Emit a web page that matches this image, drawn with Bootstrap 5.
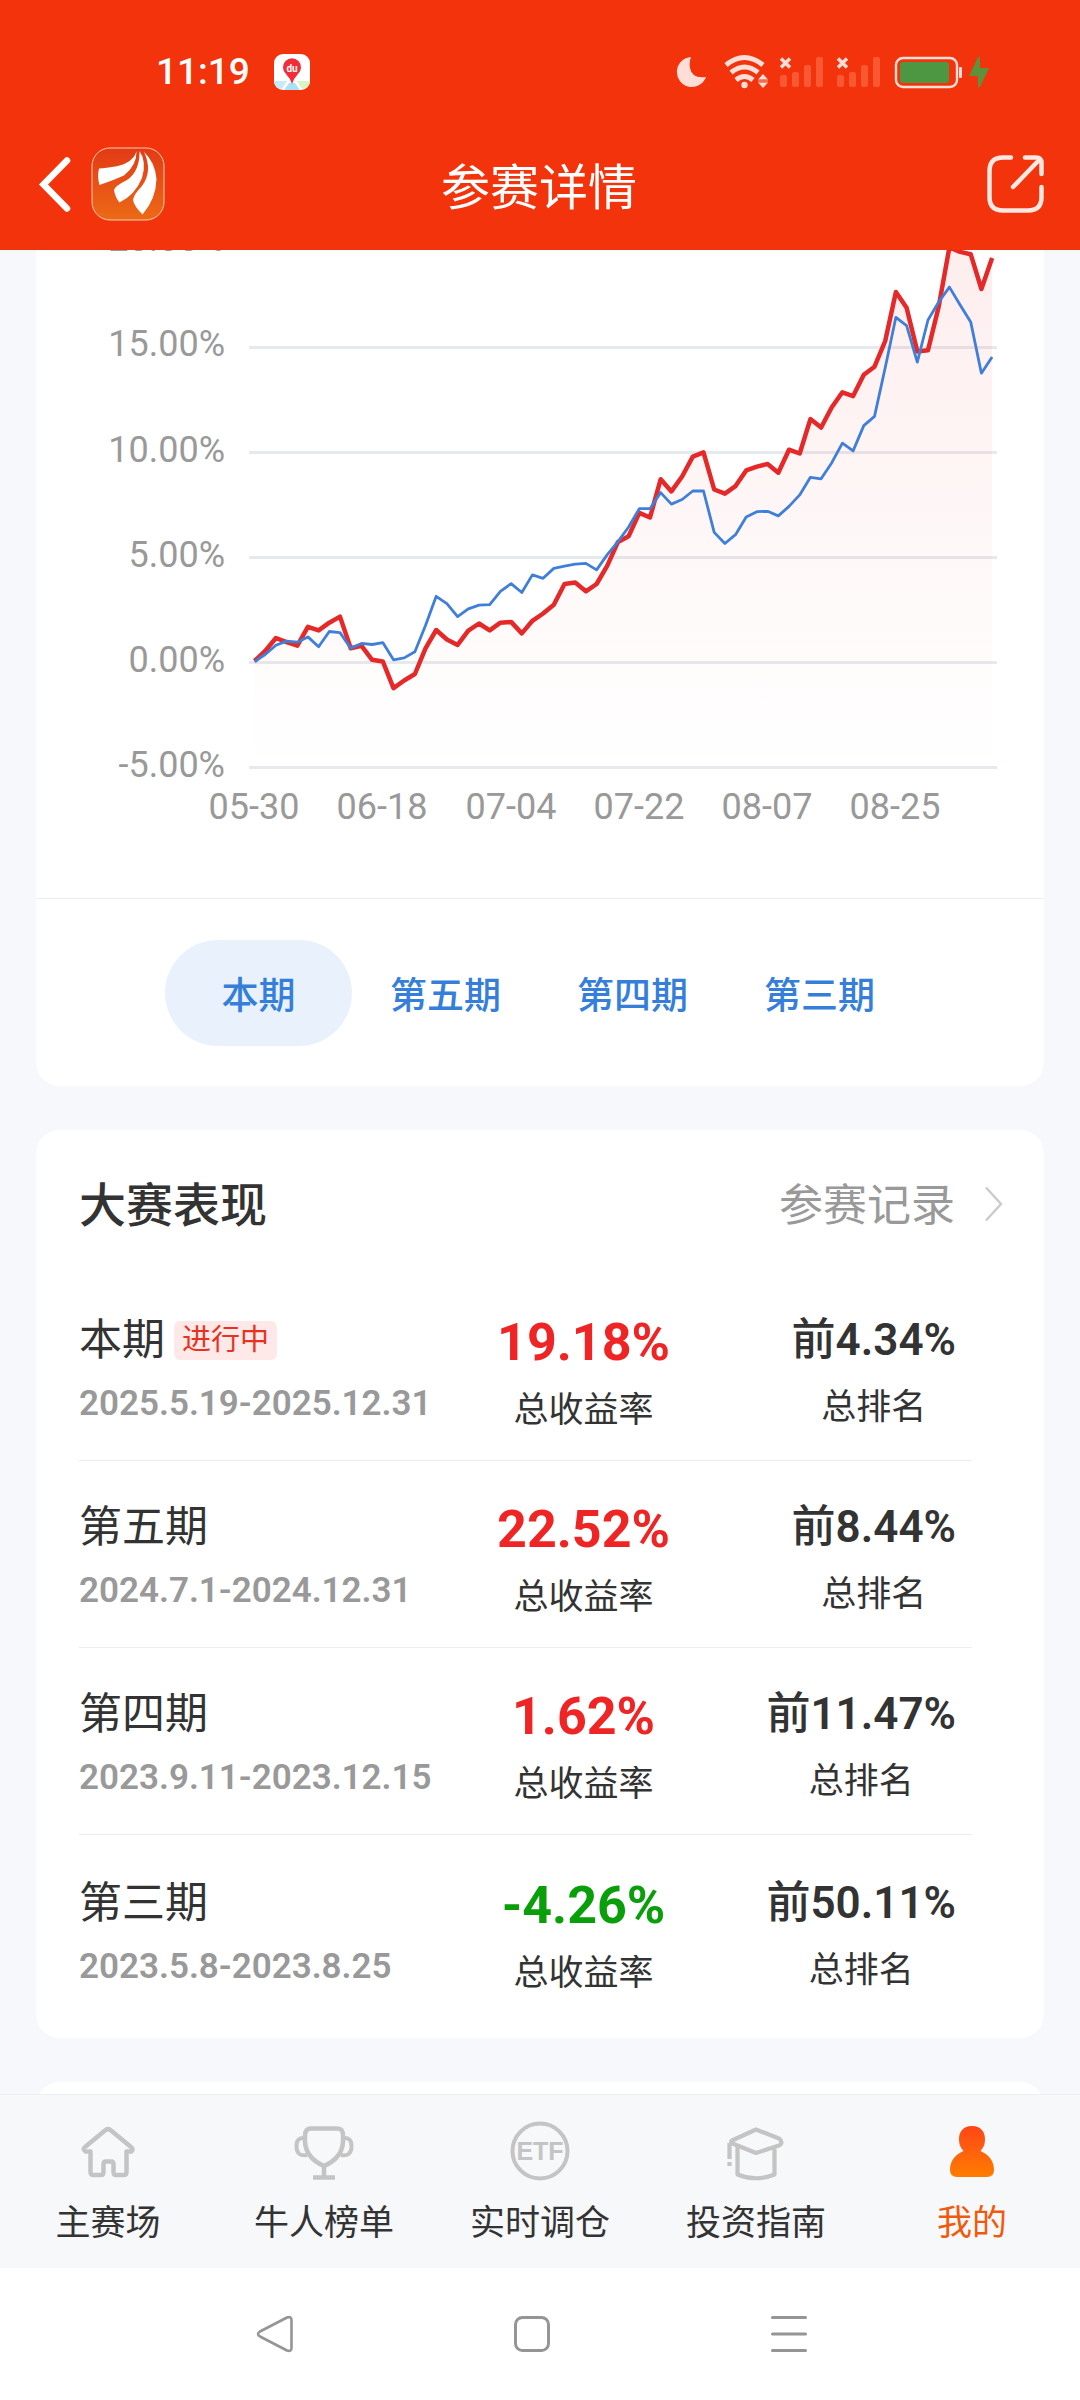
<!DOCTYPE html>
<html lang="zh-CN">
<head>
<meta charset="utf-8">
<meta name="viewport" content="width=device-width, initial-scale=1">
<title>参赛详情</title>
<link href="https://cdn.jsdelivr.net/npm/bootstrap@5.3.0/dist/css/bootstrap.min.css" rel="stylesheet">
<style>
  :root { --brand: #f2330b; --ink: #333; --muted: #999; --page: #f6f8fb; --rule: #ebedef; --up: #ef2424; --down: #0a9f0a; --link: #357fdb; }
  body { font-family: Roboto, "Noto Sans CJK SC", sans-serif; background: var(--page); color: var(--ink); }
  h1, .term-btn, .caption-text { font-family: "Noto Sans CJK SC", sans-serif; }
  svg { display: block; flex: none; }
  a { text-decoration: none; color: inherit; }
  .top-area { background: var(--brand); color: #fff; }
  .status-line { padding: 42px 90px 0 156px; height: 102px; }
  .clock { font-size: 37px; line-height: 60px; font-weight: 500; }
  .title-line { height: 148px; padding: 16px 34px 0 32px; }
  .title-line h1 { font-size: 49px; line-height: 60px; }
  .side { width: 240px; }
  .icon-btn { background: none; border: 0; padding: 0; }
  .feed { padding: 0 36px; gap: 44px; }
  .panel { background: #fff; border-radius: 24px; flex: none; }
  .panel-first { border-radius: 0 0 24px 24px; }
  .panel-next { height: 90px; }
  .chart { width: 100%; height: auto; }
  .chart text { font-size: 36px; fill: var(--muted); }
  .term-bar { border-top: 1px solid var(--rule); padding: 41px 2px 40px 0; }
  .term-btn { width: 187px; height: 106px; border: 0; border-radius: 53px; background: none; color: var(--link); font-size: 37px; font-weight: 500; line-height: 106px; padding: 0; }
  .term-btn.active { background: #e9f2fc; }
  .panel-head { padding: 44px 41px 36px 43px; }
  .panel-head h2 { font-size: 47px; line-height: 64px; font-weight: 500; }
  .more-link { font-size: 44px; line-height: 64px; color: var(--muted); gap: 30px; }
  .record-list { padding: 0 72px 36px 43px; }
  .record { padding: 34px 0 21px; border-bottom: 1px solid var(--rule); }
  .record:last-child { border: 0; padding: 36px 0 0; }
  .record div > div { line-height: 64px; }
  .col-term { width: 43%; }
  .col-rate { width: 27%; padding-top: 3px; }
  .col-rank { padding-right: 16px; }
  .term-name { font-size: 43px; gap: 9px; }
  .term-tag { font-size: 29px; line-height: 39px; padding: 0 8px; border-radius: 6px; background: #fee9e8; color: #e6321f; }
  .term-date { font-size: 35px; font-weight: 600; color: var(--muted); }
  .rate-num { font-size: 52px; font-weight: 700; color: var(--up); }
  .rate-num.down { color: var(--down); }
  .rank-num { font-size: 44px; font-weight: 500; }
  .rank-num b { font-weight: 600; }
  .caption-text { font-size: 35px; }
  .tab-bar { background: #f7f8fa; border-top: 1px solid var(--rule); height: 174px; padding-top: 23px; }
  .tab-bar a { font-size: 35px; line-height: 50px; gap: 15px; flex: 1; }
  .tab-bar a.active { color: #f15a0c; }
  .line-icon { fill: none; stroke: #c4c4c4; stroke-width: 5; stroke-linejoin: round; }
  .sys-bar { background: #fff; height: 132px; padding: 0 15% 0 13.5%; }
  .sys-bar svg { fill: none; stroke: #959595; stroke-width: 3; stroke-linejoin: round; stroke-linecap: round; }
</style>
</head>
<body>
<div class="vh-100 d-flex flex-column">
  <header class="top-area flex-shrink-0">
    <div class="status-line d-flex justify-content-between">
      <div class="d-flex align-items-center gap-4">
        <span class="clock">11:19</span>
        <svg width="36" height="36" viewBox="0 0 36 36" aria-label="地图">
          <rect width="36" height="36" rx="9" fill="#fff"/>
          <path d="M0 27h13L8 35Q0 34 0 27z" fill="#c5eafb"/><path d="M36 27H23l5 8q8-1 8-8z" fill="#d8f5c3"/><path d="M15 29h6l5 7H10z" fill="#a9e2f8"/>
          <path d="M18 30Q16 24 12 20A9 9 0 1 1 24 20Q20 24 18 30z" fill="#f22d37"/>
          <text x="18" y="18" font-size="10" font-weight="700" fill="#fff" text-anchor="middle">du</text>
        </svg>
      </div>
      <svg width="314" height="60" viewBox="676 42 314 60" fill="#ffded8">
        <path d="M691 57a15 15 0 1 0 15 20q-14 2-16-9-1-6 1-11z"/>
        <g fill="none" stroke="#ffded8" stroke-width="5"><path d="M726 65q18.500-15 37 0"/><path d="M731 72.500q13.500-11 27 0"/><path d="M736 80q8.500-7 17 0"/></g>
        <circle cx="744.500" cy="85" r="3.200"/>
        <path d="M758 79.500l5-5.500 5 5.500zM758 82.500h10l-5 5.500z"/><path d="M758 81h10" stroke="#f9a08c"/>
        <g fill="#fa5832"><rect x="780" y="75" width="7" height="12" rx="2"/><rect x="792" y="72" width="7" height="15" rx="2"/><rect x="804" y="65" width="7" height="22" rx="2"/><rect x="816" y="57" width="7" height="30" rx="2"/>
        <rect x="837" y="75" width="7" height="12" rx="2"/><rect x="849" y="72" width="7" height="15" rx="2"/><rect x="861" y="65" width="7" height="22" rx="2"/><rect x="873" y="57" width="7" height="30" rx="2"/></g>
        <path d="M781 58.500l9 9m0-9l-9 9M838 58.500l9 9m0-9l-9 9" stroke="#ffded8" stroke-width="3.500"/>
        <rect x="896" y="58" width="61" height="29" rx="7" fill="none" stroke="#ffded8" stroke-width="2.400"/>
        <rect x="900" y="62" width="49" height="21" rx="3" fill="#4d9743"/><rect x="959" y="67" width="3" height="11" rx="1"/>
        <path d="M978 57l-9 19h9v11h2l9-19h-9V57z" fill="#5d913a"/>
      </svg>
    </div>
    <div class="title-line d-flex align-items-center justify-content-between">
      <div class="side d-flex align-items-center">
        <button class="icon-btn" type="button" aria-label="返回"><svg width="59" height="74" viewBox="32 147 59 74"><path d="M67 160.500L43.500 184.500 67 208.500" fill="none" stroke="#fff" stroke-width="6.500" stroke-linecap="round" stroke-linejoin="miter"/></svg></button>
        <a href="#" aria-label="首页"><svg width="74" height="74" viewBox="0 0 74 74">
          <defs><linearGradient id="lg" x2="0" y2="1"><stop stop-color="#e33a16"/><stop offset="1" stop-color="#ec6a16"/></linearGradient></defs>
          <rect x="1" y="1" width="72" height="72" rx="18" fill="url(#lg)" stroke="#f9cfae"/>
          <g fill="#fff"><path d="M45.500 4C42 16 30 20 8 21.500Q6 30 8.500 38Q22 33.500 33 28.500Q46 18 45.500 4z"/><path d="M48.500 4Q49 24 36 33Q24 39 23 43Q24 50 28.500 55.500Q44 48 51 31Q56 15 48.500 4z"/><path d="M53 5Q64 15 65.500 32Q65 52 51.500 67.500Q43 59 42 53Q43 47 51 39Q62 24 53 5z"/></g>
        </svg></a>
      </div>
      <h1 class="m-0 fw-normal">参赛详情</h1>
      <div class="side d-flex justify-content-end">
        <button class="icon-btn" type="button" aria-label="分享"><svg width="60" height="60" viewBox="0 0 60 60" fill="none" stroke="#ffe7e2" stroke-width="4.500" stroke-linecap="round" stroke-linejoin="round"><path d="M25 3.500H17Q3.500 3.500 3.500 17V43Q3.500 56.500 17 56.500H42Q55.500 56.500 55.500 43V33"/><path d="M39 3.500H50Q55.500 3.500 55.500 9V20M54 5L27 33"/></svg></button>
      </div>
    </div>
  </header>

  <main class="feed flex-fill d-flex flex-column overflow-hidden" style="min-height:0">
    <section class="panel panel-first">
      <svg class="chart" viewBox="36 250 1008 648" role="img" aria-label="收益率走势">
        <defs><linearGradient id="fade" gradientUnits="userSpaceOnUse" x1="0" y1="240" x2="0" y2="768"><stop stop-color="#ef2424" stop-opacity=".08"/><stop offset="1" stop-color="#ef2424" stop-opacity="0"/></linearGradient></defs>
        <path d="M249 347.500H997M249 452.500H997M249 557.500H997M249 662.500H997M249 767.500H997" stroke="#e6e9ee" stroke-width="3"/>
        <g text-anchor="end"><text x="225" y="251">20.00%</text><text x="225" y="356">15.00%</text><text x="225" y="462">10.00%</text><text x="225" y="567">5.00%</text><text x="225" y="672">0.00%</text><text x="225" y="777">-5.00%</text></g>
        <g text-anchor="middle"><text x="254" y="819">05-30</text><text x="382" y="819">06-18</text><text x="511" y="819">07-04</text><text x="639" y="819">07-22</text><text x="767" y="819">08-07</text><text x="895" y="819">08-25</text></g>
        <polygon id="area" fill="url(#fade)"/>
        <polyline id="mine" fill="none" stroke="#e52929" stroke-width="4.500" stroke-linejoin="round"/>
        <polyline id="index" fill="none" stroke="#3f7fd9" stroke-width="2.800" stroke-linejoin="round"/>
      </svg>
      <div class="term-bar d-flex justify-content-center">
        <button type="button" class="term-btn active">本期</button>
        <button type="button" class="term-btn">第五期</button>
        <button type="button" class="term-btn">第四期</button>
        <button type="button" class="term-btn">第三期</button>
      </div>
    </section>

    <section class="panel">
      <div class="panel-head d-flex justify-content-between">
        <h2 class="m-0">大赛表现</h2>
        <a href="#" class="more-link d-flex align-items-center">参赛记录
          <svg class="mb-1" width="18" height="36" viewBox="0 0 18 36"><path d="M1 1.500L16 18 1 34.500" fill="none" stroke="#ccc" stroke-width="2.500"/></svg></a>
      </div>
      <ul class="record-list list-unstyled m-0">
        <li class="record d-flex">
          <div class="col-term"><div class="term-name d-flex align-items-center">本期<span class="term-tag">进行中</span></div><div class="term-date">2025.5.19-2025.12.31</div></div>
          <div class="col-rate text-center"><div class="rate-num">19.18%</div><div class="caption-text">总收益率</div></div>
          <div class="col-rank text-center ms-auto"><div class="rank-num">前<b>4.34%</b></div><div class="caption-text">总排名</div></div>
        </li>
        <li class="record d-flex">
          <div class="col-term"><div class="term-name">第五期</div><div class="term-date">2024.7.1-2024.12.31</div></div>
          <div class="col-rate text-center"><div class="rate-num">22.52%</div><div class="caption-text">总收益率</div></div>
          <div class="col-rank text-center ms-auto"><div class="rank-num">前<b>8.44%</b></div><div class="caption-text">总排名</div></div>
        </li>
        <li class="record d-flex">
          <div class="col-term"><div class="term-name">第四期</div><div class="term-date">2023.9.11-2023.12.15</div></div>
          <div class="col-rate text-center"><div class="rate-num">1.62%</div><div class="caption-text">总收益率</div></div>
          <div class="col-rank text-center ms-auto"><div class="rank-num">前<b>11.47%</b></div><div class="caption-text">总排名</div></div>
        </li>
        <li class="record d-flex">
          <div class="col-term"><div class="term-name">第三期</div><div class="term-date">2023.5.8-2023.8.25</div></div>
          <div class="col-rate text-center"><div class="rate-num down">-4.26%</div><div class="caption-text">总收益率</div></div>
          <div class="col-rank text-center ms-auto"><div class="rank-num">前<b>50.11%</b></div><div class="caption-text">总排名</div></div>
        </li>
      </ul>
    </section>
    <section class="panel panel-next"></section>
  </main>

  <nav class="tab-bar d-flex flex-shrink-0" aria-label="主导航">
    <a href="#" class="d-flex flex-column align-items-center">
      <svg class="line-icon" width="66" height="66" viewBox="0 0 66 66"><path d="M30 12.500Q33 9.500 36 12.500L56 29Q59 31 56.500 33.500H51.500V54Q51.500 57 48.500 57H41Q38.500 57 38.500 54V46Q38.500 43.500 36 43.500H31Q28.500 43.500 28.500 46V54Q28.500 57 26 57H18.500Q15.500 57 15.500 54V33.500H10.500Q7 31 10 29z" stroke-width="4.500"/></svg>主赛场</a>
    <a href="#" class="d-flex flex-column align-items-center">
      <svg class="line-icon" width="66" height="66" viewBox="0 0 66 66"><path d="M20 10.500H46Q52.500 10.500 52 18V24Q51 40 33 48Q15 40 14 24V18Q14 10.500 20 10.500zM33 48V58M22 59.500H44" stroke-width="4.500"/><path d="M14 20Q5 19 5.500 29T16 37M52 20Q61 19 60.500 29T50 37" stroke-width="4"/></svg>牛人榜单</a>
    <a href="#" class="d-flex flex-column align-items-center">
      <svg class="line-icon" width="66" height="66" viewBox="0 0 66 66"><circle cx="33" cy="33" r="27.500" stroke-width="4"/><text x="33" y="42" text-anchor="middle" font-size="25" font-weight="700" font-family="Liberation Sans, sans-serif" fill="#c4c4c4" stroke="none">ETF</text></svg>实时调仓</a>
    <a href="#" class="d-flex flex-column align-items-center">
      <svg class="line-icon" width="66" height="66" viewBox="0 0 66 66"><path d="M33 11.500L9 22.500Q7 24 9.500 25.500L33 35 56 27.500Q61 24.500 56 20.500zM14.500 29V56.500Q33 64 51.500 56.500V31M6.500 25V41M6.500 44V48" stroke-width="4.200"/></svg>投资指南</a>
    <a href="#" class="active d-flex flex-column align-items-center" aria-current="page">
      <svg width="66" height="66" viewBox="0 0 66 66"><defs><linearGradient id="me" x2="0" y2="1"><stop stop-color="#ff4518"/><stop offset="1" stop-color="#ff7d00"/></linearGradient></defs><path d="M33 8C42 8 46 14 46 21C46 27 44 30 41.500 33C51 37 55 44 55 52Q55 59 48 59H18Q11 59 11 52C11 44 15 37 24.500 33C22 30 20 27 20 21C20 14 24 8 33 8z" fill="url(#me)"/></svg>我的</a>
  </nav>
  <div class="sys-bar d-flex align-items-center flex-shrink-0">
    <button class="icon-btn flex-fill d-flex justify-content-center" type="button" aria-label="系统返回"><svg width="38" height="38" viewBox="0 0 38 38"><path d="M31 2.500Q35.500 1 35.500 5V33Q35.500 37 31 35.500L4 21.500Q0 19 4 16.500z" stroke-width="2.600"/></svg></button>
    <button class="icon-btn flex-fill d-flex justify-content-center" type="button" aria-label="主屏幕"><svg width="38" height="38" viewBox="0 0 38 38"><rect x="2.500" y="2.500" width="33" height="33" rx="7"/></svg></button>
    <button class="icon-btn flex-fill d-flex justify-content-center" type="button" aria-label="最近任务"><svg width="38" height="38" viewBox="0 0 38 38"><path d="M2.500 2.500h33M2.500 19h33M2.500 35.500h33"/></svg></button>
  </div>
</div>
<script src="https://cdn.jsdelivr.net/npm/bootstrap@5.3.0/dist/js/bootstrap.bundle.min.js"></script>
<script>
  // Daily levels; 0% sits at 1130 and one percent spans 54.9 steps upward.
  const mine = [1126,1100,1066,1077,1086,1037,1046,1026,1010,1093,1086,1123,1127,1197,1177,1160,1093,1045,1070,1084,1047,1028,1046,1026,1024,1054,1021,1002,979,925,921,944,925,877,815,800,739,751,651,683,644,592,581,678,689,669,628,618,611,634,574,584,494,516,463,424,434,378,357,290,162,203,317,314,200,45,57,63,154,73];
  const index = [1128,1109,1085,1074,1077,1063,1089,1049,1052,1093,1080,1083,1078,1123,1118,1102,1033,957,976,1010,990,980,979,944,924,947,901,910,884,878,873,871,888,848,814,776,728,728,686,716,704,682,682,790,819,796,750,736,735,747,722,692,646,650,608,557,577,511,487,360,228,250,345,235,188,149,195,240,374,332];
  const pts = s => s.map((v, i) => (254.5 + i * 10.69).toFixed(1) + ',' + (662.5 - (1130 - v) / 2.613).toFixed(1)).join(' ');
  document.getElementById('mine').setAttribute('points', pts(mine));
  document.getElementById('index').setAttribute('points', pts(index));
  document.getElementById('area').setAttribute('points', pts(mine) + ' 992,767 254.5,767');
</script>
</body>
</html>
